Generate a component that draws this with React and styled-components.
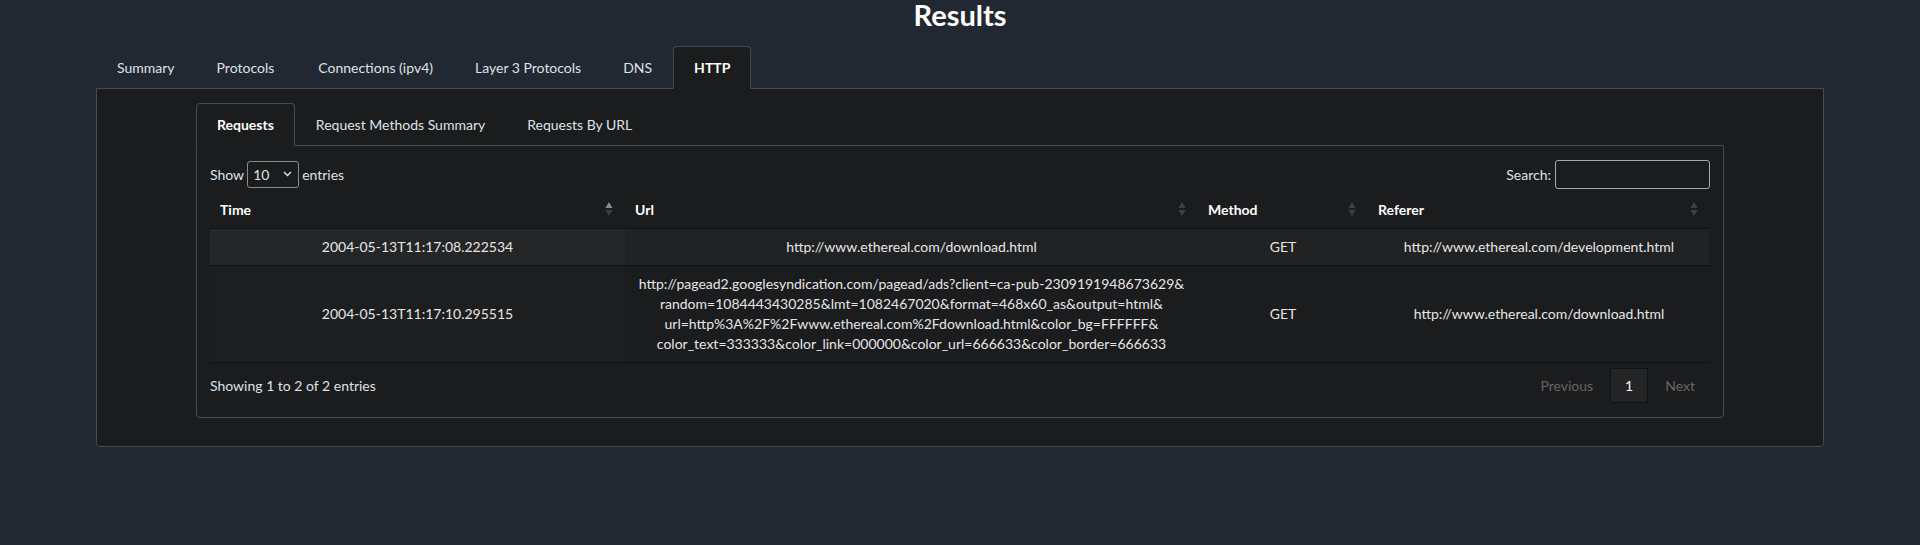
import React from 'react';
import styled, { createGlobalStyle } from 'styled-components';

const GlobalStyle = createGlobalStyle`
  body {
    margin: 0;
    background: #222831;
    color: #dee2e6;
    font-family: Lato, "Noto Sans", sans-serif;
    font-size: 14px;
  }
`;

const Page = styled.div`
  display: flex;
  flex-direction: column;
  align-items: center;
  height: 545px;
`;

const Title = styled.h2`
  margin: 0 0 17px;
  font-size: 29px;
  line-height: 29px;
  font-weight: 700;
  color: #fff;
`;

const Tabs = styled.div`
  width: 1728px;
  display: flex;
  margin-bottom: -1px;
  position: relative;
  z-index: 1;
`;

const Tab = styled.div`
  padding: 11px 20px 10px;
  margin-right: ${(p) => p.$extra || 0}px;
  line-height: 20px;
  border: 1px solid ${(p) => (p.$active ? '#4a4a4a' : 'transparent')};
  border-bottom-color: ${(p) => (p.$active ? '#1b1c1e' : 'transparent')};
  border-radius: 4px 4px 0 0;
  background: ${(p) => (p.$active ? '#1b1c1e' : 'transparent')};
  color: ${(p) => (p.$active ? '#fff' : '#dee2e6')};
  font-weight: ${(p) => (p.$active ? 700 : 400)};
`;

const Panel = styled.div`
  box-sizing: border-box;
  width: 1728px;
  background: #1b1c1e;
  border: 1px solid #4a4a4a;
  border-radius: 0 0 4px 4px;
  padding: 14px 99px 28px;
`;

const InnerTabs = styled(Tabs)`
  width: auto;
`;

const Card = styled.div`
  border: 1px solid #4a4a4a;
  border-radius: 0 0 4px 4px;
  padding: 14px 13px;
`;

const TopBar = styled.div`
  display: flex;
  justify-content: space-between;
  align-items: center;
  height: 29px;
`;

const Label = styled.label`
  display: flex;
  align-items: center;
  gap: 3px;
  color: #dee2e6;
`;

const SelectWrap = styled.span`
  position: relative;
  display: inline-flex;
`;

const Select = styled.select`
  appearance: none;
  width: 52px;
  height: 27px;
  box-sizing: border-box;
  padding: 0 0 0 5px;
  border: 1px solid #8a8a8a;
  border-radius: 3px;
  background: #1b1c1e;
  color: #dee2e6;
  font-family: Lato, sans-serif;
  font-size: 14px;
`;

const Chevron = styled.svg`
  position: absolute;
  right: 7px;
  top: 10px;
  pointer-events: none;
`;

const SearchInput = styled.input`
  width: 155px;
  height: 29px;
  box-sizing: border-box;
  border: 1px solid #aaa;
  border-radius: 3px;
  background: transparent;
  color: #dee2e6;
  margin-left: 1px;
`;

const Table = styled.table`
  width: 100%;
  table-layout: fixed;
  border-collapse: collapse;
`;

const Th = styled.th`
  position: relative;
  text-align: left;
  font-weight: 700;
  color: #fff;
  padding: 11px 18px 8px 10px;
  line-height: 20px;
  border-bottom: 1px solid #111;
`;

const SortIcon = styled.svg`
  position: absolute;
  right: 12px;
  top: 12px;
`;

const Row = styled.tr`
  background: ${(p) => (p.$striped ? '#212224' : 'transparent')};
  border-bottom: 1px solid #111;
`;

const Td = styled.td`
  padding: 8px 10px;
  line-height: 20px;
  text-align: center;
  color: #e6e6e6;
  background: ${(p) => (p.$sorted ? (p.$striped ? '#252628' : '#1d1e20') : 'transparent')};
`;

const Footer = styled.div`
  display: flex;
  justify-content: space-between;
  align-items: center;
  margin-top: 5px;
`;

const Info = styled.div`
  color: #dee2e6;
`;

const Pager = styled.div`
  display: flex;
  gap: 2px;
`;

const PageButton = styled.span`
  padding: 7px 14px 6px;
  line-height: 20px;
  border: 1px solid ${(p) => (p.$current ? '#111' : 'transparent')};
  background: ${(p) => (p.$current ? '#232426' : 'transparent')};
  color: ${(p) => (p.$current ? '#fff' : '#666')};
`;

const Sort = ({ dir }) => (
  <SortIcon width="8" height="16" viewBox="0 0 8 16">
    <polygon points="4,1 7.5,7 0.5,7" fill={dir === 'asc' ? '#8a8a8a' : '#3e3e3e'} />
    <polygon points="0.5,9 7.5,9 4,15" fill={dir === 'desc' ? '#8a8a8a' : '#3e3e3e'} />
  </SortIcon>
);

const columns = [
  { name: 'Time', width: 415, dir: 'asc' },
  { name: 'Url', width: 573 },
  { name: 'Method', width: 170 },
  { name: 'Referer', width: 342 },
];

const rows = [
  {
    time: '2004-05-13T11:17:08.222534',
    url: ['http://www.ethereal.com/download.html'],
    method: 'GET',
    referer: 'http://www.ethereal.com/development.html',
  },
  {
    time: '2004-05-13T11:17:10.295515',
    url: [
      'http://pagead2.googlesyndication.com/pagead/ads?client=ca-pub-2309191948673629&',
      'random=1084443430285&lmt=1082467020&format=468x60_as&output=html&',
      'url=http%3A%2F%2Fwww.ethereal.com%2Fdownload.html&color_bg=FFFFFF&',
      'color_text=333333&color_link=000000&color_url=666633&color_border=666633',
    ],
    method: 'GET',
    referer: 'http://www.ethereal.com/download.html',
  },
];

const topTabs = [
  { label: 'Summary' },
  { label: 'Protocols', extra: 2 },
  { label: 'Connections (ipv4)' },
  { label: 'Layer 3 Protocols' },
  { label: 'DNS' },
  { label: 'HTTP', active: true },
];
const subTabs = ['Requests', 'Request Methods Summary', 'Requests By URL'];

const App = () => {
  return (
    <>
      <GlobalStyle />
      <Page>
        <Title>Results</Title>
        <Tabs>
          {topTabs.map((t) => (
            <Tab key={t.label} $active={t.active} $extra={t.extra}>
              {t.label}
            </Tab>
          ))}
        </Tabs>
        <Panel>
          <InnerTabs>
            {subTabs.map((t) => (
              <Tab key={t} $active={t === 'Requests'}>
                {t}
              </Tab>
            ))}
          </InnerTabs>
          <Card>
            <TopBar>
              <Label>
                Show
                <SelectWrap>
                  <Select defaultValue="10">
                    <option value="10">10</option>
                    <option value="25">25</option>
                    <option value="50">50</option>
                    <option value="100">100</option>
                  </Select>
                  <Chevron width="9" height="6" viewBox="0 0 9 6">
                    <path d="M1 1l3.5 3.5L8 1" stroke="#dee2e6" strokeWidth="1.4" fill="none" />
                  </Chevron>
                </SelectWrap>
                entries
              </Label>
              <Label>
                Search:
                <SearchInput type="search" />
              </Label>
            </TopBar>
            <Table>
              <colgroup>
                {columns.map((c) => (
                  <col key={c.name} style={{ width: c.width }} />
                ))}
              </colgroup>
              <thead>
                <tr>
                  {columns.map((c) => (
                    <Th key={c.name}>
                      {c.name}
                      <Sort dir={c.dir} />
                    </Th>
                  ))}
                </tr>
              </thead>
              <tbody>
                {rows.map((r, i) => (
                  <Row key={r.time} $striped={i % 2 === 0}>
                    <Td $sorted $striped={i % 2 === 0}>
                      {r.time}
                    </Td>
                    <Td>
                      {r.url.map((line, j) => (
                        <React.Fragment key={j}>
                          {j > 0 && <br />}
                          {line}
                        </React.Fragment>
                      ))}
                    </Td>
                    <Td>{r.method}</Td>
                    <Td>{r.referer}</Td>
                  </Row>
                ))}
              </tbody>
            </Table>
            <Footer>
              <Info>Showing 1 to 2 of 2 entries</Info>
              <Pager>
                <PageButton>Previous</PageButton>
                <PageButton $current>1</PageButton>
                <PageButton>Next</PageButton>
              </Pager>
            </Footer>
          </Card>
        </Panel>
      </Page>
    </>
  );
};

export default App;
